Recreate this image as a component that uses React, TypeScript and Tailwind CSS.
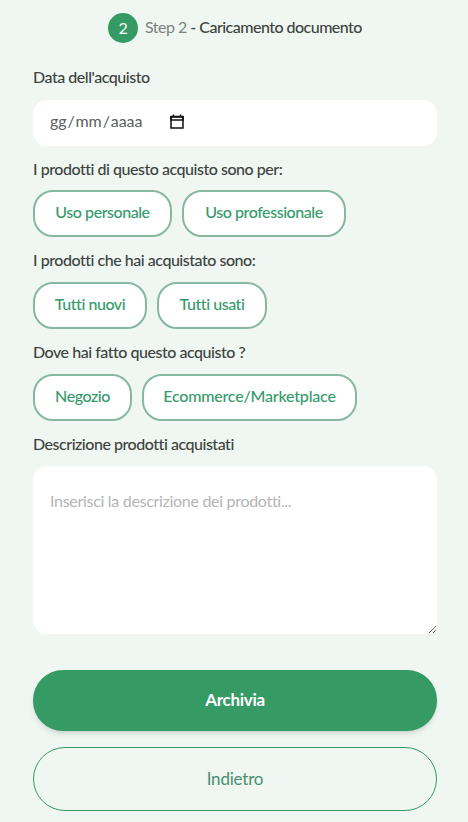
const font = '[font-family:Lato,"Noto_Sans",sans-serif]'

function Label({ children }: { children: React.ReactNode }) {
  return <div className="h-[22px] text-[16px] leading-[22px] font-medium tracking-[-0.47px] text-[#3d4340]">{children}</div>
}

function Choice({ label, width, tracking = 'tracking-[-0.45px]' }: { label: string; width: string; tracking?: string }) {
  return (
    <button
      type="button"
      className={`h-[47px] ${width} rounded-[20px] border-2 border-[#86b8a0] bg-white pb-[3px] text-[16px] font-medium ${tracking} text-[#359a6b]`}
    >
      {label}
    </button>
  )
}

export default function App() {
  return (
    <div className={`h-[822px] w-[468px] overflow-hidden bg-[#f0f7f2] pr-[31px] pl-[33px] ${font}`}>
      <div className="flex h-[56px] items-center justify-center">
        <div className="flex h-[30px] w-[30px] items-center justify-center rounded-full bg-[#359a63] text-[16px] text-white">
          2
        </div>
        <div className="ml-[7px] pb-[2px] text-[16px] tracking-[-0.52px] text-[#7d827f]">
          Step 2 <span className="font-medium text-[#3d4340]">- Caricamento documento</span>
        </div>
      </div>

      <div className="pt-[10px]">
        <Label>Data dell'acquisto</Label>
      </div>
      <div className="mt-[12px] flex h-[46px] items-center rounded-[14px] bg-white pb-[4px] pl-[17px] text-[16px] text-[#5a5f5c]">
        <span className="tracking-[-0.1px]">
          gg<span className="mx-[1px]">/</span>mm<span className="mx-[1px]">/</span>aaaa
        </span>
        <svg className="ml-[28px]" width="14" height="15" viewBox="0 0 14 15" fill="none">
          <path d="M1 3h12v11H1z" stroke="#111" strokeWidth="1.5" />
          <path d="M1 2.5h12V6H1zM3.5 0.5v2M10.5 0.5v2" stroke="#111" strokeWidth="1.5" />
        </svg>
      </div>

      <div className="mt-[12px]">
        <Label>I prodotti di questo acquisto sono per:</Label>
      </div>
      <div className="mt-[10px] flex gap-[10px]">
        <Choice label="Uso personale" width="w-[139px]" />
        <Choice label="Uso professionale" width="w-[164px]" />
      </div>

      <div className="mt-[12px]">
        <Label>I prodotti che hai acquistato sono:</Label>
      </div>
      <div className="mt-[11px] flex gap-[10px]">
        <Choice label="Tutti nuovi" width="w-[114px]" />
        <Choice label="Tutti usati" width="w-[110px]" />
      </div>

      <div className="mt-[12px]">
        <Label>Dove hai fatto questo acquisto ?</Label>
      </div>
      <div className="mt-[11px] flex gap-[10px]">
        <Choice label="Negozio" width="w-[99px]" />
        <Choice label="Ecommerce/Marketplace" width="w-[215px]" tracking="tracking-[-0.2px]" />
      </div>

      <div className="mt-[12px]">
        <Label>Descrizione prodotti acquistati</Label>
      </div>
      <textarea
        className="mt-[11px] block h-[168px] w-[404px] rounded-[14px] bg-white px-[17px] py-[24px] text-[16px] leading-[22px] tracking-[-0.3px] outline-none placeholder:text-[#b3b5b4]"
        placeholder="Inserisci la descrizione dei prodotti..."
      />

      <button
        type="button"
        className="mt-[36px] block h-[61px] w-[404px] rounded-[30px] bg-[#359a63] pb-[2px] text-[17px] font-bold tracking-[-0.3px] text-white shadow-md"
      >
        Archivia
      </button>
      <button
        type="button"
        className="mt-[16px] block h-[64px] w-[404px] rounded-[32px] border border-[#359a63] pb-[1px] text-[17px] tracking-[-0.2px] text-[#4a8f70]"
      >
        Indietro
      </button>
    </div>
  )
}
